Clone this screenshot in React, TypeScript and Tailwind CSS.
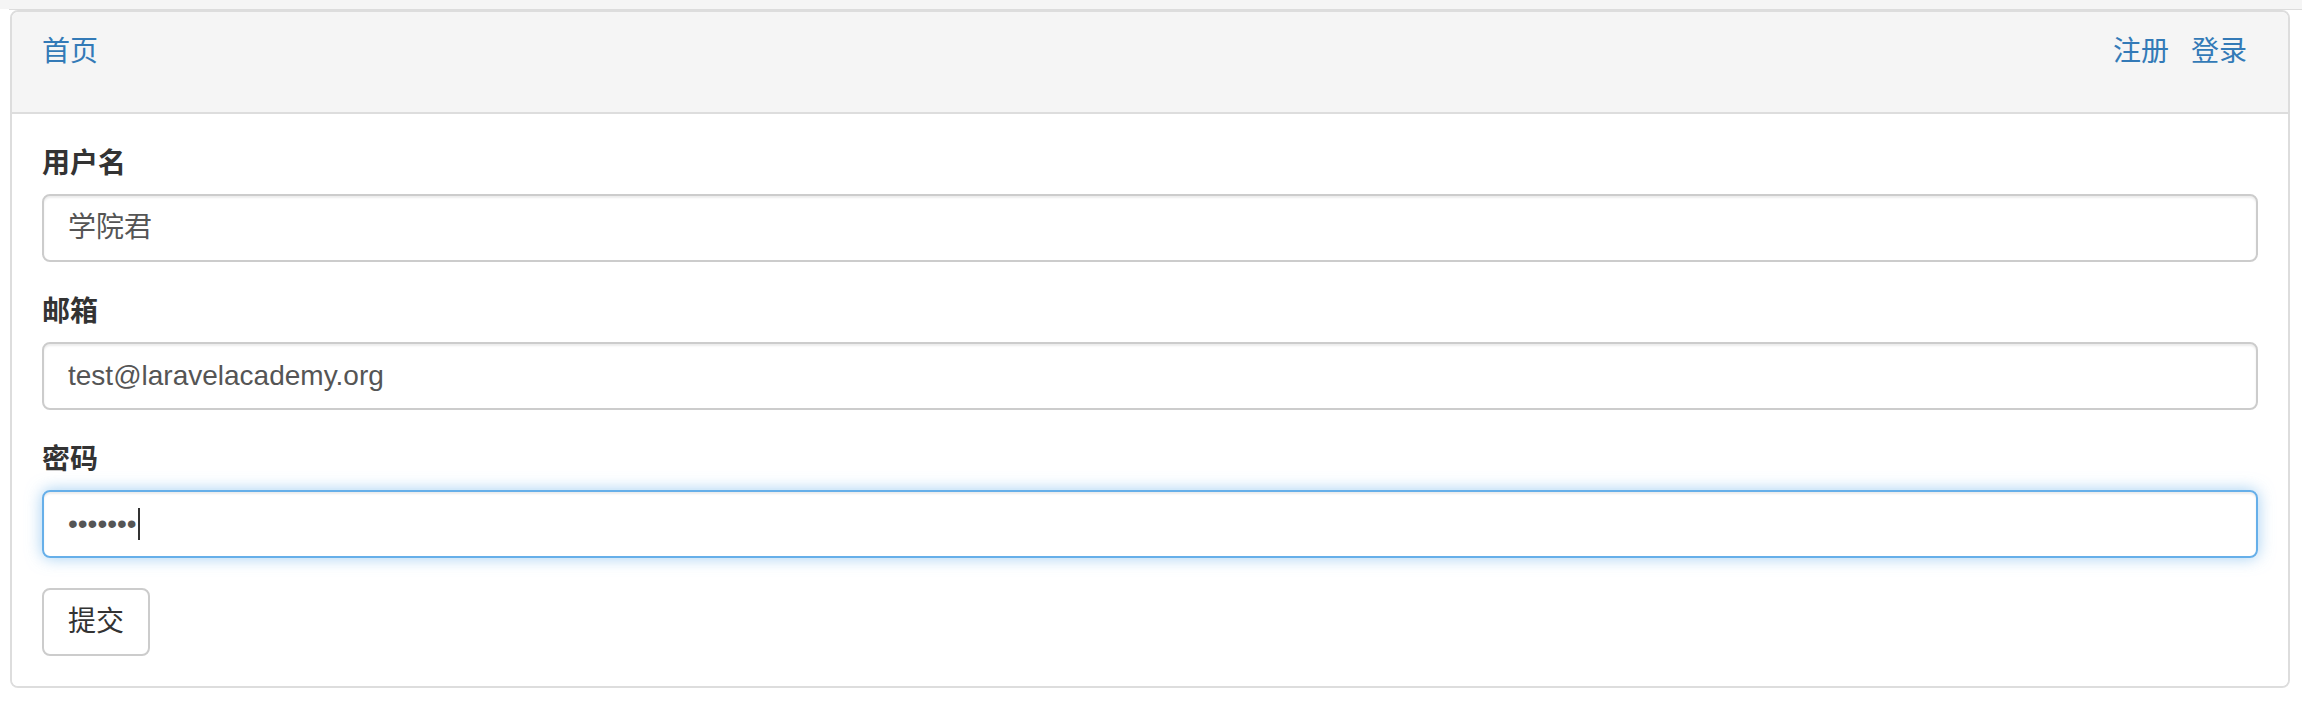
import React from "react";

const font = { fontFamily: '"Liberation Sans", "Noto Sans CJK SC", Arial, sans-serif' };

export default function App() {
  return (
    <div className="w-[2302px] h-[708px] bg-white overflow-hidden" style={font}>
      <div className="h-[9px] bg-[#f5f5f5]" />
      <div className="ml-[9px] h-[1px] bg-[#dcdcdc]" />
      <div className="ml-[10px] w-[2280px] border-2 border-[#dddddd] rounded-[8px] overflow-hidden">
        <div className="h-[102px] bg-[#f5f5f5] border-b-2 border-[#dddddd] px-[30px] pt-[20px] flex justify-between items-start text-[28px] leading-[40px] text-[#337ab7]">
          <a className="cursor-pointer">首页</a>
          <div className="flex gap-[22px] mr-[11px]">
            <a className="cursor-pointer">注册</a>
            <a className="cursor-pointer">登录</a>
          </div>
        </div>
        <div className="p-[30px] bg-white">
          <div className="mb-[30px]">
            <label className="block font-bold text-[28px] leading-[40px] text-[#333333] mb-[10px]">用户名</label>
            <div className="h-[68px] border-2 border-[#cccccc] rounded-[8px] px-[24px] flex items-center text-[28px] text-[#555555] shadow-[inset_0_2px_2px_rgba(0,0,0,0.075)]">
              学院君
            </div>
          </div>
          <div className="mb-[30px]">
            <label className="block font-bold text-[28px] leading-[40px] text-[#333333] mb-[10px]">邮箱</label>
            <div className="h-[68px] border-2 border-[#cccccc] rounded-[8px] px-[24px] flex items-center text-[28px] text-[#555555] shadow-[inset_0_2px_2px_rgba(0,0,0,0.075)]">
              test@laravelacademy.org
            </div>
          </div>
          <div className="mb-[30px]">
            <label className="block font-bold text-[28px] leading-[40px] text-[#333333] mb-[10px]">密码</label>
            <div className="h-[68px] border-2 border-[#66afe9] rounded-[8px] px-[24px] flex items-center text-[28px] text-[#555555] shadow-[inset_0_2px_2px_rgba(0,0,0,0.075),0_0_16px_rgba(102,175,233,0.6)]">
              <span>•••••••</span>
              <span className="inline-block w-[2px] h-[32px] bg-[#333333] ml-[1px]" />
            </div>
          </div>
          <button className="h-[68px] border-2 border-[#cccccc] rounded-[8px] px-[24px] text-[28px] leading-[40px] text-[#333333] bg-white" style={font}>
            提交
          </button>
        </div>
      </div>
    </div>
  );
}
